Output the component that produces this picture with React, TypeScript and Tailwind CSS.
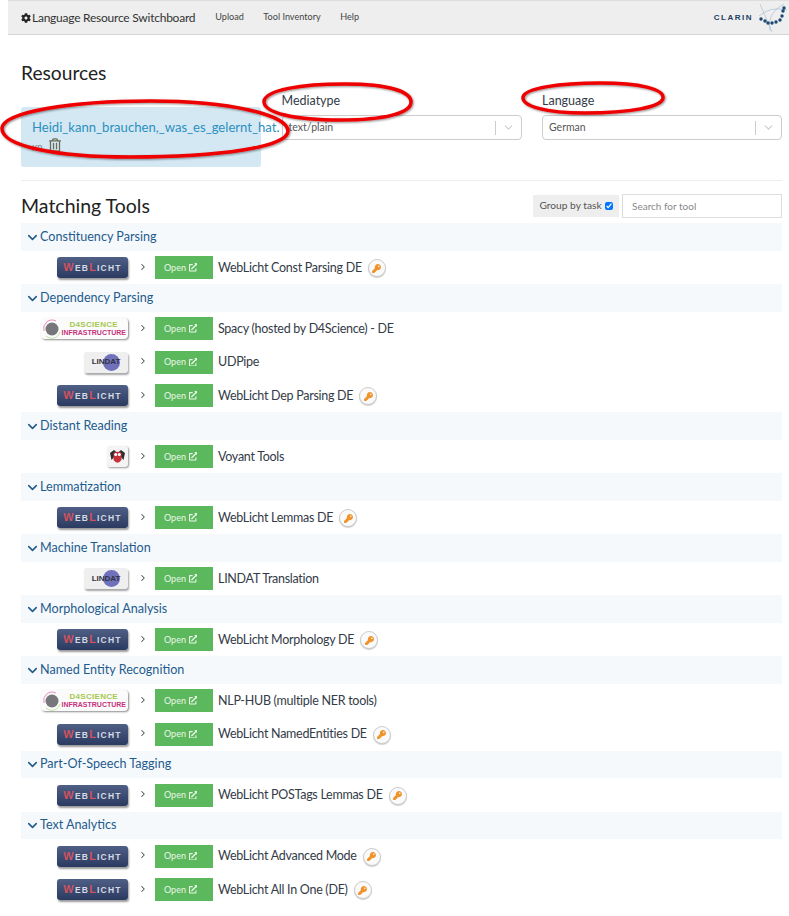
import { ChevronDown, ChevronRight } from 'lucide-react';
import { FaCog, FaExternalLinkAlt, FaKey, FaRegTrashAlt } from 'react-icons/fa';

type LogoName = 'weblicht' | 'd4science' | 'lindat' | 'voyant';

type Tool = {
  logo: LogoName;
  name: string;
  auth?: boolean;
};

const groups: { task: string; tools: Tool[] }[] = [
  { task: 'Constituency Parsing', tools: [{ logo: 'weblicht', name: 'WebLicht Const Parsing DE', auth: true }] },
  {
    task: 'Dependency Parsing',
    tools: [
      { logo: 'd4science', name: 'Spacy (hosted by D4Science) - DE' },
      { logo: 'lindat', name: 'UDPipe' },
      { logo: 'weblicht', name: 'WebLicht Dep Parsing DE', auth: true },
    ],
  },
  { task: 'Distant Reading', tools: [{ logo: 'voyant', name: 'Voyant Tools' }] },
  { task: 'Lemmatization', tools: [{ logo: 'weblicht', name: 'WebLicht Lemmas DE', auth: true }] },
  { task: 'Machine Translation', tools: [{ logo: 'lindat', name: 'LINDAT Translation' }] },
  { task: 'Morphological Analysis', tools: [{ logo: 'weblicht', name: 'WebLicht Morphology DE', auth: true }] },
  {
    task: 'Named Entity Recognition',
    tools: [
      { logo: 'd4science', name: 'NLP-HUB (multiple NER tools)' },
      { logo: 'weblicht', name: 'WebLicht NamedEntities DE', auth: true },
    ],
  },
  { task: 'Part-Of-Speech Tagging', tools: [{ logo: 'weblicht', name: 'WebLicht POSTags Lemmas DE', auth: true }] },
  {
    task: 'Text Analytics',
    tools: [
      { logo: 'weblicht', name: 'WebLicht Advanced Mode', auth: true },
      { logo: 'weblicht', name: 'WebLicht All In One (DE)', auth: true },
    ],
  },
];

const WebLichtLogo = () => (
  <div className="flex h-[21px] w-[71px] items-center justify-center rounded-[3px] bg-gradient-to-b from-[#4f5f85] to-[#2b3a60] shadow-[1px_2px_2px_rgba(0,0,0,0.4)]">
    <span className="font-['Liberation_Sans',sans-serif] text-[8.500px] font-bold uppercase leading-none tracking-[1.200px] text-[#d5d9e4]">
      <span className="text-[11px] text-[#d0525f]">W</span>eb<span className="text-[11px] text-[#d0525f]">L</span>icht
    </span>
  </div>
);

const D4ScienceLogo = () => (
  <div className="relative h-[21px] w-[87px] rounded-[4px] bg-[#fbfbfb] shadow-[1px_1px_2px_rgba(0,0,0,0.45)]">
    <svg className="absolute left-[1px] top-0" width="20" height="21" viewBox="0 0 20 21" fill="none">
      <circle cx="10" cy="11" r="6.500" fill="#77777b" />
      <path d="M2 13 A8.500 8.500 0 0 1 14 3" stroke="#e070b0" strokeWidth="0.800" />
      <path d="M4 18 A8.500 8.500 0 0 0 18 14" stroke="#b5dc8c" strokeWidth="0.800" />
    </svg>
    <div className="absolute right-[2px] top-[3px] flex flex-col items-center font-['Liberation_Sans',sans-serif] font-bold uppercase leading-[7.500px]">
      <span className="text-[8px] tracking-[0.300px] text-[#a5c850]">D4Science</span>
      <span className="text-[7px] text-[#c8327c]">Infrastructure</span>
    </div>
  </div>
);

const LindatLogo = () => (
  <div className="relative flex h-[21px] w-[44px] items-center justify-center overflow-hidden rounded-[3px] bg-[#efefef] shadow-[1px_2px_2px_rgba(0,0,0,0.35)]">
    <div className="absolute left-[19px] top-[2px] h-[17px] w-[17px] rounded-full bg-[#6f71bb]" />
    <span className="relative font-['Liberation_Sans',sans-serif] text-[8px] font-bold leading-none text-[#333344]">LINDAT</span>
  </div>
);

const VoyantLogo = () => (
  <div className="flex h-[21px] w-[21px] items-center justify-center rounded-[3px] bg-[#f4f4f4] shadow-[1px_1px_2px_rgba(0,0,0,0.4)]">
    <svg width="17" height="17" viewBox="0 0 17 17">
      <path d="M1 5 L5 2 L8.5 5 L12 2 L16 5 L14.5 12 L11 8 H6 L2.500 12 Z" fill="#2f2f2f" />
      <path d="M4.500 5 Q8.500 2.500 12.500 5 L12.500 12 Q8.500 17.500 4.500 12 Z" fill="#c7323a" />
      <circle cx="6.700" cy="6.500" r="1.500" fill="#fff" />
      <circle cx="10.300" cy="6.500" r="1.500" fill="#fff" />
    </svg>
  </div>
);

const logos: Record<LogoName, () => React.ReactElement> = {
  weblicht: WebLichtLogo,
  d4science: D4ScienceLogo,
  lindat: LindatLogo,
  voyant: VoyantLogo,
};

const ClarinMark = () => (
  <svg width="30" height="30" viewBox="0 0 30 30" fill="none">
    <path d="M2 1 L14 29 M1 13 Q12 3 29 7" stroke="#9dbbd2" strokeWidth="0.6" />
    <path d="M12 28 Q8 10 26 1" stroke="#9dbbd2" strokeWidth="0.6" />
    {[[3, 16], [7, 18], [10, 20], [14, 20], [18, 19], [22, 17], [24, 13], [25, 8], [26, 5]].map(([cx, cy]) => (
      <circle key={`${cx}-${cy}`} cx={cx} cy={cy} r="1.700" fill="#1c4873" />
    ))}
  </svg>
);

const Select = ({ label, value }: { label: string; value: string }) => (
  <div className="flex flex-col">
    <label className="h-[22px] text-[12.500px] leading-[16px] text-[#333b47]">{label}</label>
    <div className="flex h-[25px] items-center rounded-[4px] border border-[#cccccc] bg-white pl-[6px]">
      <span className="flex-1 text-[10.500px] text-[#555555]">{value}</span>
      <div className="h-[14px] w-px bg-[#cccccc]" />
      <ChevronDown className="mx-[6px] h-[13px] w-[13px] text-[#cccccc]" strokeWidth={2} />
    </div>
  </div>
);

const ToolRow = ({ tool }: { tool: Tool }) => {
  const Logo = logos[tool.logo];
  return (
    <div className="flex h-[33.500px] items-start pt-[5.500px]">
      <div className="flex h-[23px] w-[107px] items-center justify-end">
        <Logo />
      </div>
      <div className="flex h-[21px] w-[27px] items-center pl-[10px]">
        <ChevronRight className="h-[10px] w-[10px] text-[#444c58]" strokeWidth={2.500} />
      </div>
      <a className="flex h-[23px] w-[58px] items-center gap-[3px] bg-[#5cb85c] pl-[9px] text-[9px] text-[#eaf6ea]">
        Open <FaExternalLinkAlt className="h-[8.500px] w-[8.500px]" />
      </a>
      <div className="flex h-[24px] items-center pl-[5px] text-[12.500px] tracking-[-0.280px] text-[#333b47]">
        <span>{tool.name}</span>
        {tool.auth && (
          <span className="ml-[6px] flex h-[18px] w-[18px] items-center justify-center rounded-full border border-[#cccccc] bg-[#fafafa] shadow-[0_1px_1px_rgba(0,0,0,0.2)]">
            <FaKey className="h-[9px] w-[9px] text-[#f0932b]" />
          </span>
        )}
      </div>
    </div>
  );
};

const App = () => {
  return (
    <div className="relative min-h-[916px] overflow-hidden bg-white pl-[8px] font-['Lato','Noto_Sans',sans-serif]">
      <nav className="flex h-[35px] items-center border-y border-t-[#dddddd] border-b-[#d4d4d4] bg-[#eeeeee] pl-[13px] pr-[1px]">
        <FaCog className="mr-[1px] h-[10px] w-[10px] text-[#222222]" />
        <span className="text-[12px] tracking-[-0.240px] text-[#333333]">Language Resource Switchboard</span>
        <div className="ml-[20px] flex gap-[19.500px] pb-[1px] text-[9.100px] text-[#444444]">
          <span>Upload</span>
          <span>Tool Inventory</span>
          <span>Help</span>
        </div>
        <div className="ml-auto flex items-center gap-[5px]">
          <span className="font-['Liberation_Sans',sans-serif] text-[8px] font-bold tracking-[1.500px] text-[#1c3f63]">CLARIN</span>
          <ClarinMark />
        </div>
      </nav>

      <div className="pl-[13px] pr-[7px]">
        <h2 className="pt-[25px] text-[19.200px] leading-[26px] text-[#222222]">Resources</h2>
        <div className="mt-[7px] grid grid-cols-3 gap-[20.500px]">
          <div className="mt-[14px] h-[60px] rounded-[3px] bg-[#d3e8f3] pl-[11px] pt-[11px]">
            <div className="whitespace-nowrap text-[13.100px] leading-[18px] text-[#2b90c0]">Heidi_kann_brauchen,_was_es_gelernt_hat.</div>
            <div className="flex items-start gap-[7px] pt-[2px]">
              <span className="pt-[5px] text-[8px] leading-[10px] text-[#777777]">KB</span>
              <FaRegTrashAlt className="h-[14px] w-[12px] text-[#6b6b55]" />
            </div>
          </div>
          <Select label="Mediatype" value="text/plain" />
          <Select label="Language" value="German" />
        </div>

        <hr className="mt-[13px] border-[#eeeeee]" />

        <div className="flex h-[42px] items-center pt-[8px]">
          <h2 className="-mt-[1px] text-[19.500px] text-[#222222]">Matching Tools</h2>
          <label className="ml-auto flex h-[22px] w-[86px] items-center justify-center gap-[3px] bg-[#eeeeee] text-[10.200px] text-[#555555]">
            Group by task
            <input type="checkbox" defaultChecked className="h-[8px] w-[8px]" />
          </label>
          <input
            placeholder="Search for tool"
            className="ml-[3px] h-[24px] w-[160px] border border-[#dddddd] pl-[9px] text-[10px] placeholder:text-[#888888]"
          />
        </div>

        <div>
          {groups.map((group) => (
            <section key={group.task}>
              <div className="flex h-[27.500px] items-center bg-[#f5f9fc] pl-[4px] pt-[1px] text-[12.600px] text-[#1f5b8c]">
                <ChevronDown className="h-[15px] w-[15px]" strokeWidth={2.500} />
                {group.task}
              </div>
              {group.tools.map((tool) => (
                <ToolRow key={tool.name} tool={tool} />
              ))}
            </section>
          ))}
        </div>
      </div>

      {/* hand-drawn marks over the screenshot */}
      <svg className="pointer-events-none absolute left-0 top-0" width="789" height="200" fill="none">
        <defs>
          <filter id="mark" x="-5%" y="-20%" width="110%" height="140%">
            <feDropShadow dx="1" dy="1" stdDeviation="1" floodColor="#000" floodOpacity="0.45" />
          </filter>
        </defs>
        <g stroke="#ee0000" strokeWidth="3.500" filter="url(#mark)">
          <path d="M2 128 C4 112 70 101 150 101 C230 101 288 115 288 131 C288 147 220 157 130 157 C55 157 1 146 2 128 Z" />
          <path d="M264 101 C266 90 300 84 345 84 C390 84 411 92 411 102 C411 113 385 120 340 120 C295 120 263 113 264 101 Z" />
          <path d="M523 97 C525 88 560 83 600 83 C640 83 664 89 663 98 C662 107 630 113 585 113 C545 113 522 106 523 97 Z" />
        </g>
      </svg>
    </div>
  );
};

export default App;
